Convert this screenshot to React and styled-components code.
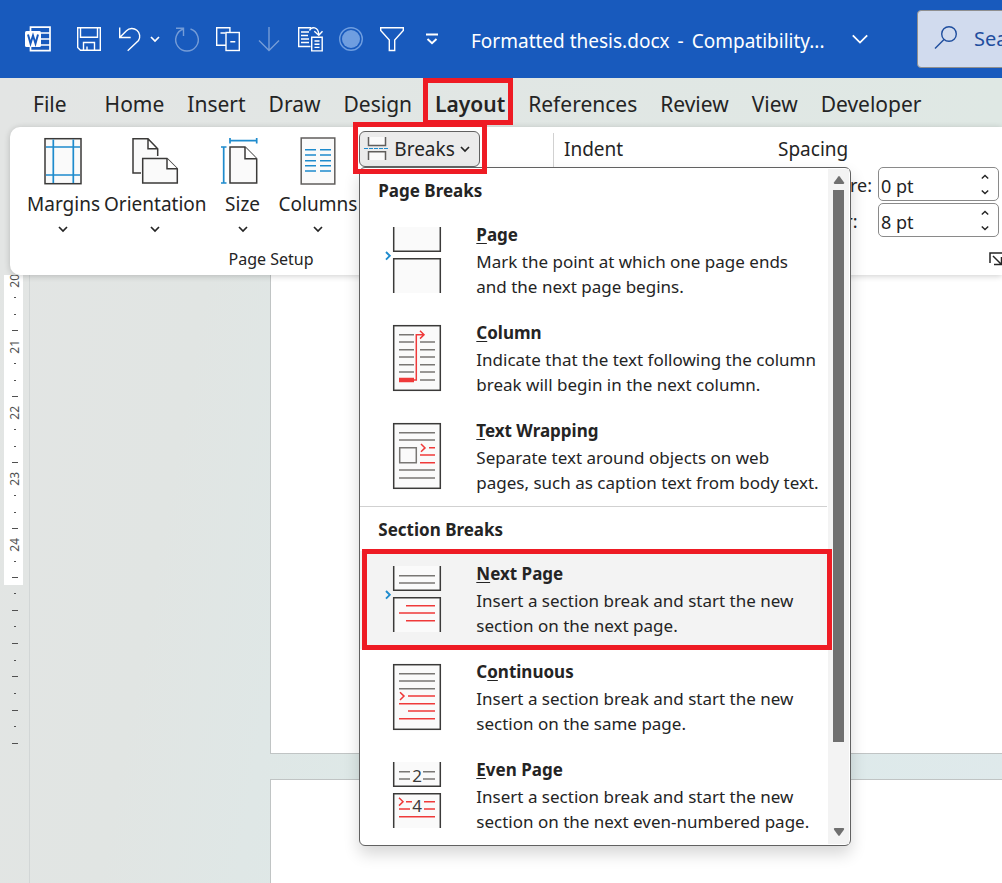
import React, { useState } from "react";
import styled, { createGlobalStyle, css } from "styled-components";

const GlobalStyle = createGlobalStyle`
* {
	box-sizing: border-box;
}
body {
	margin: 0;
	font-family: "Noto Sans", "Open Sans", sans-serif;
	color: #242424;
}
button, input {
	font: inherit;
	color: inherit;
}
button {
	border: 0;
	padding: 0;
	background: none;
}
svg {
	display: block;
	flex: none;
	fill: none;
}
`;

const Chevron = ({ size = 10, weight = 1.7 }) => (
	<svg width={size} height={size} viewBox="0 0 10 10" stroke="currentColor" strokeWidth={weight}>
		<path d="M1 3l4 4 4-4" />
	</svg>
);

/* ---------- title bar ---------- */

const WordLogo = () => (
	<svg width="26" height="26" viewBox="0 0 26 26">
		<path d="M5.500 5V1.200h19.500v23.500h-19.500V21M16 7h9M16 13h9M16 19h9" stroke="#fff" strokeWidth="1.700" />
		<rect x="0" y="5" width="16" height="16" rx="1.500" fill="#fff" />
		<path d="M3 8.500l2.500 9 2.500-8 2.500 8 2.500-9" stroke="#185abd" strokeWidth="2" />
	</svg>
);

const tools = [
	{
		name: "Save",
		art: (
			<>
				<path d="M.7.7h22.600v22.600H3.500L.7 20.500z" />
				<path d="M3.500.7v9.600h17V.7M6.500 23V15.500h11V23M10 19.500V23" />
			</>
		),
	},
	{
		name: "Undo",
		menu: true,
		art: <path d="M1.700.5v10h11M1.700 10.500L8.500 3.700A7.800 7.800 0 0 1 20.500 13.500L9.700 23.700" />,
	},
	{
		name: "Repeat",
		dim: true,
		art: <path d="M1 1.200h7.500V9M15.500 2a11.300 11.300 0 1 1-7 0" />,
	},
	{
		name: "Copy",
		art: (
			<>
				<path d="M10 18.200H.7V.7h13.200V5" />
				<rect x="10" y="5.500" width="13.300" height="18" />
				<path d="M4.500 6h5M14.300 14.700h5" />
			</>
		),
	},
	{
		name: "Move down",
		dim: true,
		art: <path d="M12 0v23M2 13.500l10 10 10-10" />,
	},
	{
		name: "Paste special",
		art: (
			<>
				<path d="M12.500 19.500H.7V.7H13M3 5h8M3 8.500h7M3 12h8M3 15.500h8" />
				<path d="M13.700 10.200h10.500v13.700H13.700zM16.500 14h5M16.500 17.200h5M16.500 20.400h5" />
				<path d="M11.500 3.500C13.500-.8 20.500-.6 20.800 8M16.300 4.300l4.500 4 3.700-4" />
			</>
		),
	},
	{
		name: "Record macro",
		art: (
			<>
				<circle cx="12" cy="12" r="11.300" stroke="#6f9ee0" />
				<circle cx="12" cy="12" r="9" fill="#6f9ee0" stroke="none" />
			</>
		),
	},
	{
		name: "Filter",
		art: <path d="M.7.700h22.600v2.800l-8.600 9.500v10.500H9.300V13L.7 3.500z" />,
	},
	{
		name: "Customize toolbar",
		art: (
			<path d="M5 7.500h12M6.500 12l4.500 4.300 4.500-4.300" strokeWidth="1.900" />
		),
	},
];

const TitleBar = styled.header`
display: flex;
align-items: center;
height: 78px;
padding-left: 25px;
background: #185abd;
color: #fff;
overflow: hidden;
`;
const Toolbar = styled.div`
display: flex;
align-items: center;
gap: 17px;
margin: 0 26px;
`;
const ToolButton = styled.button`
display: flex;
align-items: center;
gap: 8px;
margin-right: ${(p) => (p.$menu ? "-2px" : "0")};
opacity: ${(p) => (p.$dim ? 0.4 : 1)};
svg {
	overflow: visible;
}
`;
const FileTitle = styled.h1`
display: flex;
flex: none;
gap: 8px;
min-width: 380px;
margin: 0;
padding-top: 3px;
font-size: 19px;
font-weight: 400;
line-height: 28px;
white-space: nowrap;
`;
const SearchBox = styled.label`
display: flex;
flex: none;
align-items: center;
gap: 16px;
width: 320px;
height: 58px;
margin-left: 48px;
padding: 0 16px 2px;
border: 1px solid #8f8f8f;
border-radius: 4px;
background: #d1dbee;
color: #1f4e9e;
input {
	flex: 1;
	min-width: 0;
	border: 0;
	padding: 0;
	background: none;
	font-size: 20px;
}
input::placeholder {
	color: #1f4e9e;
	opacity: 1;
}
`;

/* ---------- ribbon ---------- */

const redFrame = css`
&::after {
	content: "";
	position: absolute;
	z-index: 5;
	border: 5px solid #ee1b24;
	pointer-events: none;
}
`;
const Tabs = styled.nav`
display: flex;
gap: 23px;
height: 49px;
padding-left: 33px;
`;
const Tab = styled.button`
position: relative;
font-size: 21px;
font-weight: ${(p) => (p.$active ? 600 : 400)};
line-height: 28px;
padding: 12px 0 9px;
margin-right: ${(p) => (p.$wide ? "15px" : "0")};
${(p) => p.$active && redFrame}
&::after {
	inset: 0 -8px 2px -12px;
}
`;
const RibbonPanel = styled.section`
position: relative;
z-index: 2;
display: flex;
height: 148px;
margin-left: 10px;
background: #fff;
border-radius: 10px 0 0 10px;
box-shadow: 0 1px 6px rgba(0, 0, 0, 0.2);
`;
const Group = styled.div`
display: flex;
flex: none;
flex-direction: column;
justify-content: space-between;
width: ${(p) => p.$width};
padding: 4px 0 4px ${(p) => p.$indent};
`;
const GroupRow = styled.div`
display: flex;
`;
const GroupFooter = styled.div`
display: flex;
align-items: center;
justify-content: ${(p) => (p.$end ? "flex-end" : "center")};
min-height: 24px;
padding-right: ${(p) => (p.$end ? "2px" : "36px")};
font-size: 16px;
line-height: 24px;
`;
const Divider = styled.div`
flex: none;
width: 1px;
margin: 6px 0;
background: #d1d1d1;
`;
const LargeButton = styled.button`
display: flex;
flex-direction: column;
align-items: center;
min-width: 68px;
padding: 6px 2px 0;
font-size: 19px;
line-height: 28px;
span {
	margin: 5px 0 6px;
}
`;
const BreaksHolder = styled.div`
position: relative;
align-self: flex-start;
${redFrame}
&::after {
	inset: -9px -7px -7px -6px;
}
`;
const BreaksButton = styled.button`
display: flex;
align-items: center;
gap: 5px;
height: 36px;
width: 121px;
padding: 0 4px;
border: 1px solid #616161;
border-radius: 6px;
background: #ebebeb;
font-size: 19px;
line-height: 28px;
`;
const Field = styled.div`
width: ${(p) => p.$width};
h2 {
	margin: 4px 0;
	font-size: 19px;
	font-weight: 400;
	line-height: 28px;
}
`;
const SpinRow = styled.div`
display: flex;
align-items: center;
gap: 5px;
margin-bottom: 2px;
font-size: 18px;
label {
	width: 95px;
	padding: 2px 0 0 33px;
}
`;
const Spinner = styled.div`
display: flex;
width: 121px;
height: 34px;
border: 1px solid #8a8a8a;
border-radius: 5px;
background: #fff;
input {
	flex: 1;
	min-width: 0;
	border: 0;
	padding: 3px 2px 0;
	background: none;
}
`;
const SpinArrows = styled.div`
display: flex;
flex-direction: column;
justify-content: space-around;
width: 27px;
padding: 1px 0;
button {
	display: flex;
	justify-content: center;
}
button:first-child svg {
	transform: rotate(180deg);
}
`;

const MarginsIcon = () => (
	<svg width="38" height="48" viewBox="0 0 38 48" strokeWidth="1.500">
		<rect x="1" y="1.700" width="36" height="45" fill="#fafafa" stroke="#3b3a39" />
		<path d="M9.300 2.500v43.500M29.300 2.500v43.500M2 10h34M2 38h34" stroke="#1e8bcd" strokeWidth="1.700" />
	</svg>
);
const OrientationIcon = () => (
	<svg width="48" height="48" viewBox="0 0 48 48" strokeWidth="1.500" stroke="#3b3a39">
		<path d="M10 36H2V1.700h15l9.700 10V19M17 1.700v10h9.700" fill="#fafafa" />
		<path d="M11.700 21.500H36l10.300 10.200V46H11.700z" fill="#fafafa" />
		<path d="M36 21.500v10.200h10.300" fill="#fff" />
	</svg>
);
const SizeIcon = () => (
	<svg width="44" height="48" viewBox="0 0 44 48" strokeWidth="1.500">
		<path d="M9 3.700h26.700M9 1v5.500M35.700 1v5.500M2.700 10v36M0 10h5.500M0 46h5.500" stroke="#1e8bcd" strokeWidth="1.700" />
		<path d="M9 10h15l11.700 11.700V46H9z" fill="#fafafa" stroke="#3b3a39" />
		<path d="M24 10v11.700h11.700" fill="#fff" stroke="#3b3a39" />
	</svg>
);
const ColumnsIcon = () => (
	<svg width="36" height="48" viewBox="0 0 36 48" strokeWidth="1.500">
		<rect x="1.200" y="1" width="33.600" height="46" fill="#fafafa" stroke="#605e5c" />
		<path
			d="M5 12.700h11M20 12.700h11M5 18h11M20 18h11M5 23.700h11M20 23.700h11M5 28.700h11M20 28.700h11M5 34h11M20 34h11"
			stroke="#1e8bcd"
		/>
	</svg>
);
const BreaksIcon = () => (
	<svg width="25" height="24" viewBox="0 0 25 24" strokeWidth="1.500">
		<path d="M4.500 0v8.500h17V0M4.500 23v-8.300h17V23" fill="#fafafa" stroke="#605e5c" />
		<path d="M0 11.500h25" stroke="#1e8bcd" strokeWidth="1.200" strokeDasharray="4 1" />
	</svg>
);
const LauncherIcon = () => (
	<svg width="15" height="14" viewBox="0 0 15 14" stroke="#242424" strokeWidth="1.500">
		<path d="M1 11V1h12M4 4l8 8M12.500 5v7.500H5" />
	</svg>
);

const ribbonButtons = [
	{ label: "Margins", Icon: MarginsIcon },
	{ label: "Orientation", Icon: OrientationIcon },
	{ label: "Size", Icon: SizeIcon },
	{ label: "Columns", Icon: ColumnsIcon },
];

/* ---------- breaks menu ---------- */

const Menu = styled.div`
position: absolute;
top: 100%;
left: 0;
z-index: 4;
display: flex;
width: 492px;
border: 1px solid #616161;
border-radius: 6px;
background: #fff;
box-shadow: 0 8px 16px rgba(0, 0, 0, 0.16);
`;
const MenuList = styled.div`
flex: 1;
`;
const MenuHeading = styled.h3`
margin: 0;
padding: 2px 0 0 18px;
font-size: 17px;
font-weight: 700;
line-height: 42px;
`;
const MenuSection = styled.div`
& + & {
	border-top: 1px solid #d1d1d1;
}
`;
const MenuItem = styled.button`
position: relative;
display: flex;
align-items: flex-start;
gap: 34px;
width: 100%;
height: 98px;
padding: 10px 0 0 24px;
text-align: left;
font-size: 17px;
line-height: 25px;
white-space: nowrap;
background: ${(p) => (p.$active ? "#f3f3f3" : "none")};
svg {
	margin-top: 4px;
}
strong {
	display: block;
	font-weight: 700;
	margin-bottom: 2px;
}
u {
	text-underline-offset: 2px;
	text-decoration-thickness: 1px;
}
${(p) => p.$active && redFrame}
&::after {
	inset: -2px -5px -1px 2px;
}
`;
const Description = styled.span`
display: block;
white-space: pre;
`;
const Scrollbar = styled.div`
display: flex;
flex-direction: column;
align-items: center;
width: 21px;
margin: 1px;
padding: 6px 0 7px;
background: #f3f3f3;
`;
const ScrollTrack = styled.div`
flex: 1;
margin: 5px 0;
`;
const ScrollThumb = styled.div`
width: 11px;
height: 552px;
background: #6f6f6f;
`;
const ScrollArrow = ({ down }) => (
	<svg width="12" height="10" viewBox="0 0 12 10">
		<path
			fill="#6f6f6f"
			d={down ? "M1.500 1h9q1.200.5.4 1.700L6.700 8.500q-.7.800-1.400 0L1.100 2.700Q.3 1.500 1.500 1z" : "M1.500 9h9q1.200-.5.4-1.700L6.700 1.500q-.7-.8-1.400 0L1.100 7.300Q.3 8.500 1.500 9z"}
		/>
	</svg>
);

const DARK = "#3b3a39";
const GRAY = "#797774";
const RED = "#ef3a3a";
const BLUE = "#1e8bcd";

const MenuArt = ({ split, arrow, gray, red, children }) => (
	<svg width="58" height="68" viewBox="0 0 58 68" strokeWidth="1.500">
		{split ? (
			<path d="M9.700 1v24.300h46.600V1M9.700 67V32.700h46.600V67" fill="#fafafa" stroke={DARK} />
		) : (
			<rect x="9.700" y="1.700" width="46.600" height="64.600" fill="#fafafa" stroke={DARK} />
		)}
		{arrow ? <path d="M2 26l3.800 3.800L2 33.600" stroke={BLUE} strokeWidth="1.900" /> : null}
		<path d={gray} stroke={GRAY} />
		<path d={red} stroke={RED} />
		{children}
	</svg>
);

const sections = [
	{
		title: "Page Breaks",
		items: [
			{
				pre: "",
				key: "P",
				post: "age",
				text: "Mark the point at which one page ends\nand the next page begins.",
				art: <MenuArt split arrow />,
			},
			{
				pre: "",
				key: "C",
				post: "olumn",
				text: "Indicate that the text following the column\nbreak will begin in the next column.",
				art: (
					<MenuArt
						gray="M15 10.700h15M15 18h15M15 25.700h15M15 33h15M15 40.700h15M15 48h15M36 18h15M36 25.700h15M36 33h15M36 40.700h15M36 48h15M36 56h15"
						red="M30 56h2.300V10.700H40M36 6.800l4 3.900-4 3.900"
					>
						<path d="M15 56h15" stroke={RED} strokeWidth="4.500" />
					</MenuArt>
				),
			},
			{
				pre: "",
				key: "T",
				post: "ext Wrapping",
				text: "Separate text around objects on web\npages, such as caption text from body text.",
				art: (
					<MenuArt
						gray="M15 10.700h36M15 18h36M15 48h36M15 56h36M15.700 25.700h16.600v15H15.700z"
						red="M37 22l4 3.900-4 3.900M45 25.700h6M36 33h15M36 40.700h15"
					/>
				),
			},
		],
	},
	{
		title: "Section Breaks",
		items: [
			{
				pre: "",
				key: "N",
				post: "ext Page",
				text: "Insert a section break and start the new\nsection on the next page.",
				active: true,
				art: <MenuArt split arrow gray="M15 10.700h36M15 18h36" red="M22 40.700h29M15 48h36M22 55.700h29" />,
			},
			{
				pre: "C",
				key: "o",
				post: "ntinuous",
				text: "Insert a section break and start the new\nsection on the same page.",
				art: (
					<MenuArt
						gray="M15 10.700h36M15 18h36M15 25.700h36"
						red="M16 29.200l4 3.900-4 3.900M24 33h27M15 40.700h36M24 48h27M15 55.700h36"
					/>
				),
			},
			{
				pre: "",
				key: "E",
				post: "ven Page",
				text: "Insert a section break and start the new\nsection on the next even-numbered page.",
				art: (
					<MenuArt
						split
						gray="M15 10.700h11M15 18h11M39 10.700h12M39 18h12"
						red="M15 36.800l4 3.900-4 3.900M22 40.700h6M40 40.700h11M15 48h11M40 48h11M15 55.700h36"
					>
						<g fill={DARK} fontSize="17" textAnchor="middle">
							<text x="33" y="21">2</text>
							<text x="33" y="51">4</text>
						</g>
					</MenuArt>
				),
			},
		],
	},
];

const BreaksMenu = () => (
	<Menu>
		<MenuList role="menu" aria-label="Breaks">
			{sections.map((section) => (
				<MenuSection key={section.title}>
					<MenuHeading>{section.title}</MenuHeading>
					{section.items.map((item) => (
						<MenuItem key={item.key} role="menuitem" $active={item.active}>
							{item.art}
							<span>
								<strong>
									{item.pre}
									<u>{item.key}</u>
									{item.post}
								</strong>
								<Description>{item.text}</Description>
							</span>
						</MenuItem>
					))}
				</MenuSection>
			))}
		</MenuList>
		<Scrollbar>
			<ScrollArrow />
			<ScrollTrack>
				<ScrollThumb />
			</ScrollTrack>
			<ScrollArrow down />
		</Scrollbar>
	</Menu>
);

/* ---------- document ---------- */

const Page = styled.div`
min-height: 100vh;
display: flex;
flex-direction: column;
overflow: hidden;
background: linear-gradient(100deg, #e3e5e4 0%, #e1e5e3 22%, #dfe7e6 34%, #dcebe9 60%, #dfe9eb 100%);
`;
const TopArea = styled.div`
background: linear-gradient(90deg, #e3e5e4, #dfe8e4);
`;
const Workspace = styled.main`
display: flex;
flex: 1;
`;
const RulerColumn = styled.div`
flex: none;
width: 30px;
padding-left: 4px;
border-right: 1px solid #d2d6d6;
`;
const RulerPart = styled.div`
display: flex;
flex-direction: column;
justify-content: flex-end;
width: 19px;
height: ${(p) => p.$height};
overflow: hidden;
background: ${(p) => (p.$white ? "#fff" : "none")};
`;
const RulerGroup = styled.div`
display: flex;
flex: none;
flex-direction: column;
height: ${(p) => p.$height};
`;
const RulerCell = styled.div`
display: flex;
flex: 1 1 0;
min-height: 0;
align-items: center;
justify-content: center;
padding-left: 3px;
`;
const Tick = styled.i`
width: ${(p) => (p.$long ? "6px" : "2px")};
height: 1px;
background: #505050;
`;
const RulerNumber = styled.span`
writing-mode: vertical-rl;
transform: rotate(180deg);
font-size: 12px;
line-height: 14px;
color: #505050;
`;
const Sheets = styled.div`
display: flex;
flex: 1;
flex-direction: column;
gap: 25px;
padding-left: 240px;
`;
const Sheet = styled.div`
height: ${(p) => p.$height};
flex: ${(p) => (p.$grow ? "1" : "none")};
border: 1px solid #c0c4c4;
border-width: ${(p) => (p.$grow ? "1px 0 0 1px" : "0 0 1px 1px")};
background: #fff;
`;

const DotDash = () => (
	<>
		<RulerCell>
			<Tick />
		</RulerCell>
		<RulerCell>
			<Tick $long />
		</RulerCell>
	</>
);

const tabNames = ["File", "Home", "Insert", "Draw", "Design", "Layout", "References", "Review", "View", "Developer"];

const App = () => {
	const [open, setOpen] = useState(true);
	const [before, setBefore] = useState(0);
	const [after, setAfter] = useState(8);

	const spinners = [
		{ id: "before", label: "Before:", value: before, change: setBefore },
		{ id: "after", label: "After:", value: after, change: setAfter },
	];

	return (
		<Page>
			<GlobalStyle />
			<TitleBar>
				<WordLogo />
				<Toolbar>
					{tools.map((tool) => (
						<ToolButton key={tool.name} aria-label={tool.name} $dim={tool.dim} $menu={tool.menu}>
							<svg width="24" height="24" viewBox="0 0 24 24" stroke="#fff" strokeWidth="1.400">
								{tool.art}
							</svg>
							{tool.menu ? <Chevron /> : null}
						</ToolButton>
					))}
				</Toolbar>
				<FileTitle>
					<span>Formatted thesis.docx</span>
					<span>-</span>
					<span>Compatibility...</span>
				</FileTitle>
				<button aria-label="File details">
					<Chevron size={18} weight={1} />
				</button>
				<SearchBox>
					<svg width="24" height="24" viewBox="0 0 24 24" stroke="currentColor" strokeWidth="1.400">
						<circle cx="15" cy="8" r="7.300" />
						<path d="M10 13.500L1 22.500" />
					</svg>
					<input type="text" placeholder="Search" aria-label="Search" />
				</SearchBox>
			</TitleBar>

			<TopArea>
				<Tabs>
					{tabNames.map((name) => (
						<Tab key={name} $active={name === "Layout"} $wide={name === "File"}>
							{name}
						</Tab>
					))}
				</Tabs>
				<RibbonPanel>
					<Group $width="543px" $indent="15px">
						<GroupRow>
							{ribbonButtons.map(({ label, Icon }) => (
								<LargeButton key={label}>
									<Icon />
									<span>{label}</span>
									<Chevron />
								</LargeButton>
							))}
							<BreaksHolder>
								<BreaksButton aria-expanded={open} onClick={() => setOpen(!open)}>
									<BreaksIcon />
									Breaks
									<Chevron />
								</BreaksButton>
								{open ? <BreaksMenu /> : null}
							</BreaksHolder>
						</GroupRow>
						<GroupFooter>Page Setup</GroupFooter>
					</Group>
					<Divider />
					<Group $width="452px" $indent="10px">
						<GroupRow>
							<Field $width="214px">
								<h2>Indent</h2>
							</Field>
							<Field $width="222px">
								<h2>Spacing</h2>
								{spinners.map((s) => (
									<SpinRow key={s.id}>
										<label htmlFor={s.id}>{s.label}</label>
										<Spinner>
											<input id={s.id} type="text" value={`${s.value} pt`} readOnly />
											<SpinArrows>
												<button aria-label={`Increase ${s.id}`} onClick={() => s.change(s.value + 6)}>
													<Chevron size={8} />
												</button>
												<button aria-label={`Decrease ${s.id}`} onClick={() => s.change(Math.max(0, s.value - 6))}>
													<Chevron size={8} />
												</button>
											</SpinArrows>
										</Spinner>
									</SpinRow>
								))}
							</Field>
						</GroupRow>
						<GroupFooter $end>
							<button aria-label="Paragraph settings">
								<LauncherIcon />
							</button>
						</GroupFooter>
					</Group>
				</RibbonPanel>
			</TopArea>

			<Workspace>
				<RulerColumn>
					<RulerPart $white $height="310px">
						{[20, 21, 22, 23].map((n) => (
							<RulerGroup key={n} $height="66px">
								<RulerCell>
									<RulerNumber>{n}</RulerNumber>
								</RulerCell>
								<RulerCell>
									<Tick />
								</RulerCell>
								<DotDash />
							</RulerGroup>
						))}
						<RulerGroup $height="48px">
							<RulerCell>
								<RulerNumber>24</RulerNumber>
							</RulerCell>
							<DotDash />
						</RulerGroup>
					</RulerPart>
					<RulerPart $height="167px">
						<RulerGroup $height="167px">
							{[1, 2, 3, 4, 5].map((n) => (
								<DotDash key={n} />
							))}
						</RulerGroup>
					</RulerPart>
				</RulerColumn>
				<Sheets>
					<Sheet $height="479px" />
					<Sheet $grow />
				</Sheets>
			</Workspace>
		</Page>
	);
};

export default App;
